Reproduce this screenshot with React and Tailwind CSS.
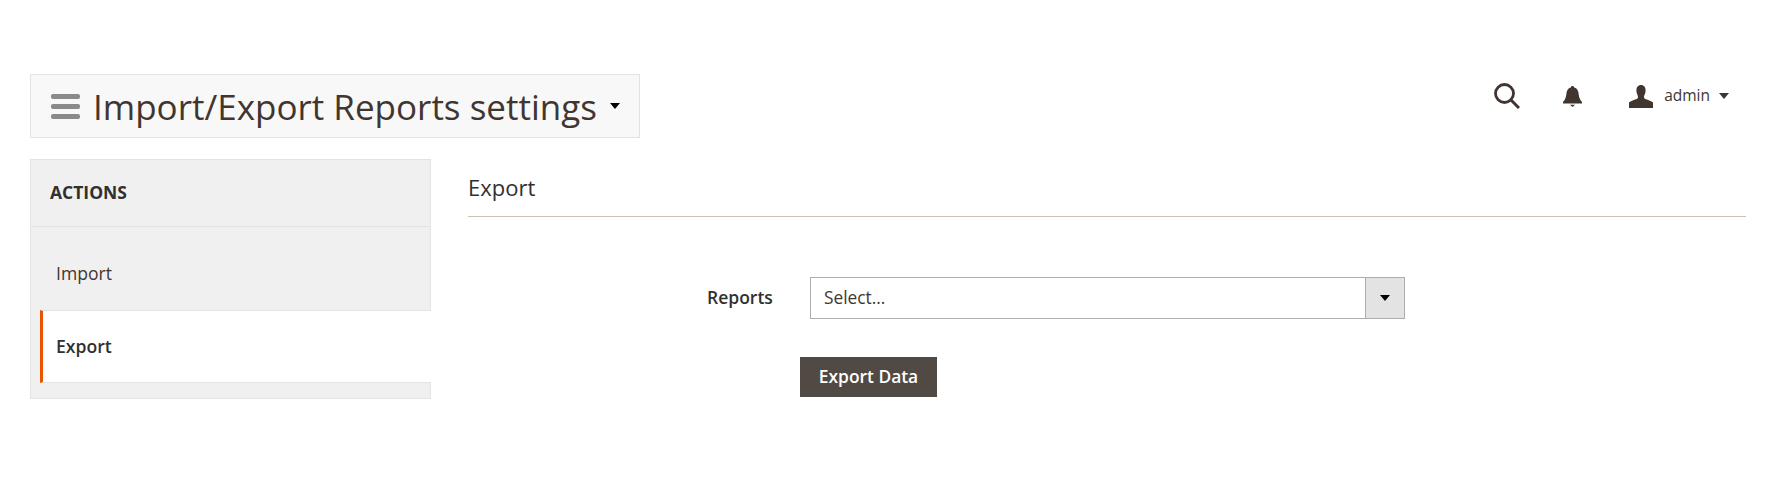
import React from 'react';

function Caret({ className }) {
  return (
    <svg className={className} viewBox="0 0 10 6" fill="currentColor">
      <path d="M0 0h10L5 6z" />
    </svg>
  );
}

function SearchIcon() {
  return (
    <svg width="26" height="26" viewBox="0 0 26 26" fill="none" stroke="#41362f">
      <circle cx="10.500" cy="10.500" r="9" strokeWidth="2.8" />
      <path d="M17 17l8 8" strokeWidth="3" />
    </svg>
  );
}

function BellIcon() {
  return (
    <svg width="19" height="21" viewBox="0 0 19 21" fill="#41362f">
      <path d="M9.500 0c1 0 1.600.6 1.700 1.600 2.900.8 4.100 3.100 4.400 6 .3 3.100.8 5.700 3.400 8.400v1.500H0V16c2.600-2.700 3.100-5.300 3.400-8.400.3-2.900 1.500-5.200 4.400-6C7.900.6 8.500 0 9.500 0z" />
      <path d="M7 18.800h5L9.500 21z" />
    </svg>
  );
}

function UserIcon() {
  return (
    <svg width="24" height="23" viewBox="0 0 24 23" fill="#41362f">
      <path d="M12 0c3 0 4.600 2.300 4.600 5.400 0 1.400-.3 2.700-.7 3.700-.4 1.100-.9 1.800-.9 2.800 0 1.200.7 1.800 2.200 2.400 2.700 1 5 1.700 6.800 3.300V23H0v-5.400c1.800-1.600 4.100-2.300 6.800-3.300 1.500-.6 2.200-1.200 2.200-2.400 0-1-.5-1.700-.9-2.800-.4-1-.7-2.300-.7-3.700C7.400 2.300 9 0 12 0z" />
    </svg>
  );
}

export default function App() {
  return (
    <div className="min-h-[498px] bg-white pt-[74px] pr-[28px] pl-[30px] font-['Open_Sans',sans-serif] text-[#41362f]">
      {/* Шапка */}
      <header className="flex items-start justify-between">
        <div className="flex h-[64px] w-[610px] items-center border border-[#e3e3e3] bg-[#f8f8f8] pl-[20px]">
          <div className="flex w-[29px] shrink-0 flex-col gap-[5px]">
            <span className="h-[5px] rounded-[2px] bg-[#8a8a8a]" />
            <span className="h-[5px] rounded-[2px] bg-[#8a8a8a]" />
            <span className="h-[5px] rounded-[2px] bg-[#8a8a8a]" />
          </div>
          <h1 className="ml-[13px] text-[35px] leading-none font-normal whitespace-nowrap">
            Import/Export Reports settings
          </h1>
          <Caret className="ml-[13px] h-[6px] w-[10px] shrink-0 text-black" />
        </div>

        <div className="mt-[9px] mr-[17px] flex items-center">
          <SearchIcon />
          <div className="ml-[43px]">
            <BellIcon />
          </div>
          <div className="ml-[47px]">
            <UserIcon />
          </div>
          <span className="ml-[11px] text-[15.5px]">admin</span>
          <Caret className="ml-[9px] h-[6px] w-[10px]" />
        </div>
      </header>

      <div className="mt-[21px] flex items-start">
        {/* Боковое меню */}
        <aside className="w-[401px] border border-[#e3e3e3] bg-[#f0f0f0] pb-[15px]">
          <div className="flex h-[67px] items-center border-b border-[#e3e3e3] pb-[2px] pl-[19px] text-[17.5px] font-bold text-[#303030]">
            ACTIONS
          </div>
          <div className="flex h-[83px] items-center pt-[10px] pl-[25px] text-[17.6px]">Import</div>
          <div className="-mr-px ml-[9px] flex h-[73px] items-center border-y border-[#e3e3e3] border-l-[3px] border-l-[#eb5202] bg-white pl-[13px] text-[17.6px] font-semibold text-[#303030]">
            Export
          </div>
        </aside>

        {/* Контент */}
        <main className="ml-[37px] flex-1">
          <h2 className="flex h-[58px] items-center border-b border-[#cac3b4] pb-[2px] text-[22px] leading-none font-medium text-[#303030]">
            Export
          </h2>

          <div className="mt-[60px] flex items-center">
            <label className="ml-[239px] w-[103px] pb-[1px] text-[17.5px] font-semibold text-[#303030]">Reports</label>
            <div className="flex h-[42px] w-[595px] border border-[#adadad]">
              <div className="flex-1 pl-[13px] text-[17.3px] leading-[40px]">Select...</div>
              <div className="flex w-[39px] items-center justify-center border-l border-[#adadad] bg-[#e3e3e3]">
                <Caret className="h-[6px] w-[10px] text-black" />
              </div>
            </div>
          </div>

          <button className="mt-[38px] ml-[332px] flex h-[40px] w-[137px] items-center justify-center bg-[#514943] pb-[2px] text-[17.4px] font-semibold text-white">
            Export Data
          </button>
        </main>
      </div>
    </div>
  );
}
